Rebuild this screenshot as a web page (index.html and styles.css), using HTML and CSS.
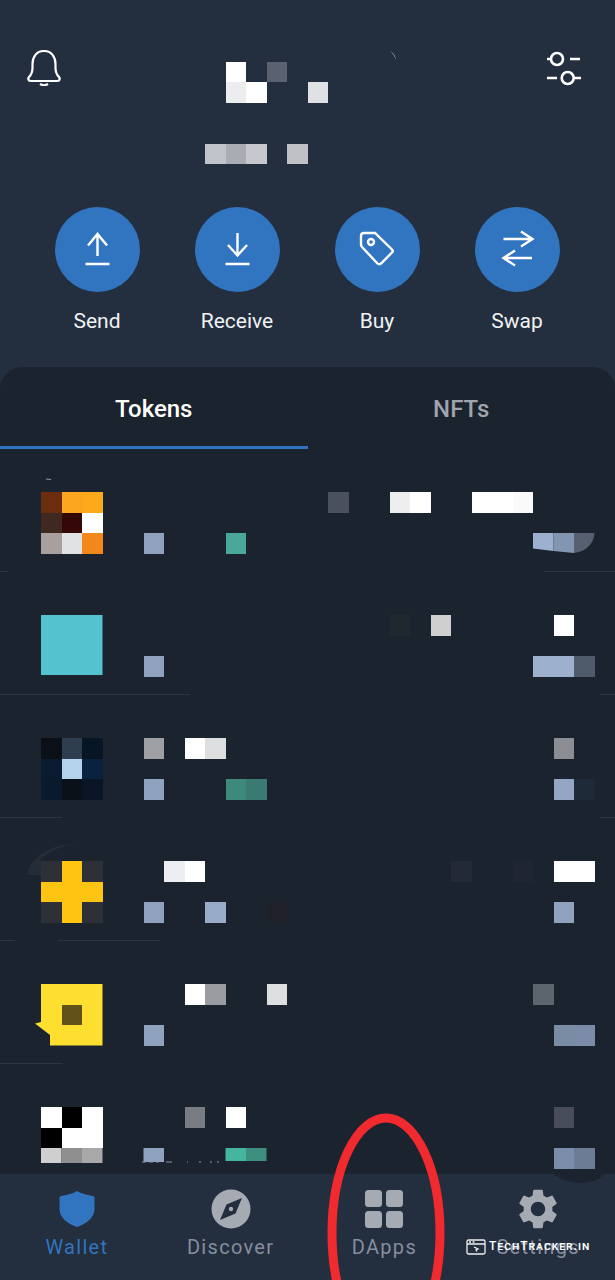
FILE: index.html
```html
<!DOCTYPE html>
<html>
<head>
	<meta charset="utf-8">
	<title>Wallet</title>
	<link rel="stylesheet" href="styles.css">
</head>
<body>
	<div class="top">
		<div class="top-bar">
			<svg class="bell" viewBox="0 0 34 36">
				<path d="M17 1C9.500 1 5.500 7 5.500 14V18C5.500 22 4 25 2 27C.5 29 1.500 31 4 31H30C32.500 31 33.500 29 32 27C30 25 28.500 22 28.500 18V14C28.500 7 24.500 1 17 1Z"/>
				<path d="M13 34Q17 36.500 21 34"/>
			</svg>
			<svg class="balance" viewBox="205 50 195 114">
				<rect class="c" x="225.500" y="61.500" fill="#fff"/>
				<rect class="c" x="266.500" y="61.500" fill="#5a6270"/>
				<rect class="c" x="225.500" y="82" fill="#ecedee"/>
				<rect class="c" x="246" y="82" fill="#fff"/>
				<rect class="c" x="307.500" y="82" fill="#e0e1e4"/>
				<rect class="c" x="205" y="143.500" fill="#c0c3ca"/>
				<rect class="c" x="225.500" y="143.500" fill="#a9acb3"/>
				<rect class="c" x="246" y="143.500" fill="#c6c8cd"/>
				<rect class="c" x="287" y="143.500" fill="#bfc1c7"/>
				<path d="M390 51Q395 54 396 60Q394 54 390 51Z" fill="#fff"/>
			</svg>
			<svg class="sliders" viewBox="546 50 36 38">
				<circle cx="557" cy="59" r="6"/>
				<circle cx="567.700" cy="78" r="6"/>
				<path d="M547 59H551M570 59H580M547 78H557M574 78H581"/>
			</svg>
		</div>
		<div class="actions">
			<div class="action">
				<svg class="action-btn" viewBox="0 0 85 85"><circle cx="42.500" cy="42.500" r="42.500"/><path d="M42.500 27V49M33 38.500L42.500 27L52 38.500M30.500 57H54.500"/></svg>
				<span>Send</span>
			</div>
			<div class="action">
				<svg class="action-btn" viewBox="0 0 85 85"><circle cx="42.500" cy="42.500" r="42.500"/><path d="M42.500 26V48M33 38L42.500 48.500L52 38M30.500 57H54.500"/></svg>
				<span>Receive</span>
			</div>
			<div class="action">
				<svg class="action-btn" viewBox="0 0 85 85"><circle cx="42.500" cy="42.500" r="42.500"/><path d="M29 26H40L57 42.500Q58.500 44 57 45.500L46 56.500Q44 58 42.500 56.500L27 40Q26 39 26 37.500V29Q26 26 29 26Z"/><circle class="hole" cx="36" cy="35" r="3"/></svg>
				<span>Buy</span>
			</div>
			<div class="action">
				<svg class="action-btn" viewBox="0 0 85 85"><circle cx="42.500" cy="42.500" r="42.500"/><path d="M28.500 32H57M46 24.500L57.500 32L46 39.500M57 51H29M40 43.500L28.500 51L40 58.500"/></svg>
				<span>Swap</span>
			</div>
		</div>
	</div>

	<div class="panel">
		<div class="tabs">
			<div class="tab active">Tokens</div>
			<div class="tab">NFTs</div>
		</div>

		<svg class="token" viewBox="0 -43 615 123">
			<rect class="c" x="41" y="0" fill="#6a2e0e"/><rect class="c" x="61.500" y="0" fill="#fca51f"/><rect class="c" x="82" y="0" fill="#fcaa1a"/>
			<rect class="c" x="41" y="20.500" fill="#3f2820"/><rect class="c" x="61.500" y="20.500" fill="#330806"/><rect class="c" x="82" y="20.500" fill="#fff"/>
			<rect class="c" x="41" y="41" fill="#a8a09d"/><rect class="c" x="61.500" y="41" fill="#e0e2e4"/><rect class="c" x="82" y="41" fill="#f2871a"/>
			<path d="M46 -13L51 -12.500" class="specks"/>
			<rect class="c" x="143.500" y="41" fill="#8fa1bd"/><rect class="c" x="225.500" y="41" fill="#4aa89a"/>
			<rect class="c" x="328" y="0" fill="#4a505c"/>
			<rect class="c" x="389.500" y="0" fill="#eeeeef"/><rect class="c" x="410" y="0" fill="#fff"/>
			<rect class="c" x="471.500" y="0" fill="#fff"/><rect class="c" x="492" y="0" fill="#fff"/><rect class="c" x="512.500" y="0" fill="#fafafa"/>
			<path d="M533 41H553.500V59L533 56.500Z" fill="#9eb0cf"/>
			<path d="M553.500 41H574V61L553.500 59Z" fill="#8396b1"/>
			<path d="M574 41H594.500C594 52 585 60 574 61Z" fill="#566070"/>
			<rect class="sep" x="0" y="79" width="8"/><rect class="sep" x="544" y="79" width="71"/>
		</svg>

		<svg class="token" viewBox="0 -43 615 123">
			<rect x="41" y="0" width="61.500" height="60" fill="#55c2cf"/>
			<rect class="c" x="143.500" y="41" fill="#8fa1bd"/>
			<rect class="c" x="389.500" y="0" fill="#20272f"/><rect class="c" x="430.500" y="0" fill="#cfcfd0"/>
			<rect class="c" x="553.500" y="0" fill="#fff"/>
			<rect class="c" x="533" y="41" fill="#9db0cd"/><rect class="c" x="553.500" y="41" fill="#9db0cd"/><rect class="c" x="574" y="41" fill="#4f5a6b"/>
			<rect class="sep" x="0" y="79" width="190"/><rect class="sep" x="600" y="79" width="15"/>
		</svg>

		<svg class="token" viewBox="0 -43 615 123">
			<rect class="c" x="41" y="0" fill="#0a0f18"/><rect class="c" x="61.500" y="0" fill="#2f3e4e"/><rect class="c" x="82" y="0" fill="#071525"/>
			<rect class="c" x="41" y="20.500" fill="#0a1a30"/><rect class="c" x="61.500" y="20.500" fill="#b5d2ec"/><rect class="c" x="82" y="20.500" fill="#0a2240"/>
			<rect class="c" x="41" y="41" fill="#0a1a2e"/><rect class="c" x="61.500" y="41" fill="#0b1119"/><rect class="c" x="82" y="41" fill="#0a1525"/>
			<rect class="c" x="143.500" y="0" fill="#9ea0a3"/><rect class="c" x="184.500" y="0" fill="#fff"/><rect class="c" x="205" y="0" fill="#dddee0"/>
			<rect class="c" x="553.500" y="0" fill="#8c8e93"/>
			<rect class="c" x="143.500" y="41" fill="#8fa3bf"/><rect class="c" x="225.500" y="41" fill="#3d8a7d"/><rect class="c" x="246" y="41" fill="#3b7a72"/>
			<rect class="c" x="553.500" y="41" fill="#94a6c4"/><rect class="c" x="574" y="41" fill="#1f2a38"/>
			<rect class="sep" x="0" y="79" width="62"/><rect class="sep" x="600" y="79" width="15"/>
		</svg>

		<svg class="token" viewBox="0 -43 615 123">
			<path d="M27 14C30 -2 48 -17 75 -17C58 -14 46 -8 40 0H41V14Z" fill="#262c37"/>
			<rect class="c" x="41" y="0" fill="#2e3038"/><rect class="c" x="61.500" y="0" fill="#ffc412"/><rect class="c" x="82" y="0" fill="#2e3038"/>
			<rect class="c" x="41" y="20.500" fill="#ffc412"/><rect class="c" x="61.500" y="20.500" fill="#ffc412"/><rect class="c" x="82" y="20.500" fill="#ffc412"/>
			<rect class="c" x="41" y="41" fill="#2e3038"/><rect class="c" x="61.500" y="41" fill="#ffc412"/><rect class="c" x="82" y="41" fill="#2e3038"/>
			<rect class="c" x="164" y="0" fill="#eceef1"/><rect class="c" x="184.500" y="0" fill="#fff"/>
			<rect class="c" x="451" y="0" fill="#232a35"/><rect class="c" x="512.500" y="0" fill="#1f2631"/>
			<rect class="c" x="553.500" y="0" fill="#fff"/><rect class="c" x="574" y="0" fill="#fff"/>
			<rect class="c" x="143.500" y="41" fill="#8fa1bf"/><rect class="c" x="205" y="41" fill="#98abc9"/><rect class="c" x="266.500" y="41" fill="#1f2029"/>
			<rect class="c" x="553.500" y="41" fill="#8fa1bf"/>
			<rect class="sep" x="0" y="79" width="15"/><rect class="sep" x="58" y="79" width="102"/>
		</svg>

		<svg class="token" viewBox="0 -43 615 123">
			<path d="M41 0H102.500V61.500H50V51L35 39.500L41 38Z" fill="#fede2f"/>
			<rect class="c" x="61.500" y="20.500" fill="#625118"/>
			<rect class="c" x="184.500" y="0" fill="#fff"/><rect class="c" x="205" y="0" fill="#9b9ca1"/><rect class="c" x="266.500" y="0" fill="#dcdee0"/>
			<rect class="c" x="533" y="0" fill="#5e646e"/>
			<rect class="c" x="143.500" y="41" fill="#8fa3bf"/>
			<rect class="c" x="553.500" y="41" fill="#7a8ba4"/><rect class="c" x="574" y="41" fill="#7c8ca8"/>
			<rect class="sep" x="0" y="79" width="63"/>
		</svg>

		<svg class="token" viewBox="0 -43 615 123">
			<rect class="c" x="41" y="0" fill="#fff"/><rect class="c" x="61.500" y="0" fill="#000"/><rect class="c" x="82" y="0" fill="#fff"/>
			<rect class="c" x="41" y="20.500" fill="#000"/><rect class="c" x="61.500" y="20.500" fill="#fff"/><rect class="c" x="82" y="20.500" fill="#fff"/>
			<rect x="41" y="41" width="20.500" height="15" fill="#cfcfcf"/><rect x="61.500" y="41" width="20.500" height="15" fill="#8f8f8f"/><rect x="82" y="41" width="20.500" height="15" fill="#a8a8a8"/>
			<rect class="c" x="184.500" y="0" fill="#7a7c84"/><rect class="c" x="225.500" y="0" fill="#fff"/>
			<rect class="c" x="553.500" y="0" fill="#484d59"/>
			<rect x="143.500" y="41" width="20.500" height="14" fill="#8fa3c0"/>
			<rect x="225.500" y="41" width="20.500" height="13" fill="#45b5a0"/><rect x="246" y="41" width="20.500" height="13" fill="#3f8f80"/>
			<path d="M142 55H146M149 55H153M156 55H159M166 55H172M187 55H188M199 55H201M210 55H212M217 55H219" class="specks"/>
			<rect class="c" x="553.500" y="41" fill="#7a8dab"/><rect class="c" x="574" y="41" fill="#6c7c95"/>
		</svg>
	</div>

	<div class="nav">
		<div class="nav-item active">
			<svg class="nav-icon" viewBox="0 0 40 40"><path d="M20 2C25 5 31 6 36 7C37 7 37.500 8 37.500 9V20C37.500 29 29 35 20 38C11 35 2.500 29 2.500 20V9C2.500 8 3 7 4 7C9 6 15 5 20 2Z"/></svg>
			<span>Wallet</span>
		</div>
		<div class="nav-item">
			<svg class="nav-icon" viewBox="0 0 40 40"><circle cx="20" cy="20" r="19.500"/><path class="needle" d="M31 9L24.500 24.500L9 31L15.500 15.500Z"/><circle cx="20" cy="20" r="2.200"/></svg>
			<span>Discover</span>
		</div>
		<div class="nav-item">
			<svg class="nav-icon" viewBox="0 0 40 40">
				<rect x="1" y="1" width="17" height="17" rx="3.500"/><rect x="22" y="1" width="17" height="17" rx="3.500"/>
				<rect x="1" y="22" width="17" height="17" rx="3.500"/><rect x="22" y="22" width="17" height="17" rx="3.500"/>
			</svg>
			<span>DApps</span>
		</div>
		<div class="nav-item">
			<svg class="nav-icon" viewBox="2 2 20 20"><path d="M19.140 12.940c.04-.3.06-.61.06-.94 0-.32-.02-.64-.07-.94l2.030-1.580c.18-.14.23-.41.12-.61l-1.920-3.320c-.12-.22-.37-.29-.59-.22l-2.390.96c-.5-.38-1.030-.7-1.620-.94l-.36-2.540c-.04-.24-.24-.41-.48-.41h-3.840c-.24 0-.43.17-.47.41l-.36 2.540c-.59.24-1.130.57-1.620.94l-2.390-.96c-.22-.08-.47 0-.59.22L2.740 8.870c-.12.21-.08.47.12.61l2.030 1.580c-.05.3-.09.63-.09.94s.02.64.07.94l-2.030 1.580c-.18.14-.23.41-.12.61l1.920 3.320c.12.22.37.29.59.22l2.390-.96c.5.38 1.030.7 1.620.94l.36 2.540c.05.24.24.41.48.41h3.840c.24 0 .44-.17.47-.41l.36-2.540c.59-.24 1.130-.56 1.620-.94l2.390.96c.22.08.47 0 .59-.22l1.920-3.320c.12-.22.07-.47-.12-.61l-2.010-1.580zM12 15.600c-1.980 0-3.600-1.620-3.600-3.600s1.620-3.600 3.600-3.600 3.600 1.620 3.600 3.600-1.620 3.600-3.600 3.600z"/></svg>
			<span>Settings</span>
		</div>
	</div>

	<!-- stuff drawn on top of the screenshot -->
	<svg class="markup" viewBox="0 1100 615 180">
		<path d="M553 1174Q566 1183 582 1183Q598 1182 604 1174Z" fill="#1b232e"/>
		<ellipse cx="386" cy="1233" rx="54" ry="115" fill="none" stroke="#f02a2e" stroke-width="9"/>
	</svg>
	<div class="watermark">
		<svg viewBox="0 0 20 16"><rect x="1" y="1" width="18" height="14" rx="1.500"/><path d="M1 5H19M3 3H5M6.500 3H8.500M8 8L12 10L10 11L11 12.500"/></svg>
		<span>TechTracker.in</span>
	</div>
</body>
</html>
```

FILE: styles.css
```css
body
{
	margin: 0;
	width: 615px;
	height: 1280px;
	overflow: hidden;
	position: relative;
	background: #232e3e;
	font-family: Roboto, "Liberation Sans", sans-serif;
	color: #fff;
}

.c
{
	width: 20.5px;
	height: 20.5px;
	shape-rendering: crispEdges;
}

/* header */
.top
{
	height: 367px;
}

.top-bar
{
	display: flex;
	align-items: flex-start;
	padding: 50px 33px 0 27px;
	margin-bottom: 43px;
}

.bell
{
	width: 34px;
	height: 36px;
	fill: none;
	stroke: #fff;
	stroke-width: 2.2;
}

.balance
{
	width: 195px;
	height: 114px;
	margin-left: 144px;
}

.sliders
{
	width: 36px;
	height: 38px;
	margin-left: auto;
	fill: none;
	stroke: #fff;
	stroke-width: 2.6;
}

.actions
{
	display: grid;
	grid-template-columns: repeat(4, 140px);
	padding-left: 27px;
}

.action
{
	display: flex;
	flex-direction: column;
	align-items: center;
	font-size: 21px;
	line-height: 24px;
	color: #f0f2f4;
}

.action-btn
{
	width: 85px;
	height: 85px;
	margin-bottom: 17px;
}

.action-btn circle
{
	fill: #3174bf;
}

.action-btn path, .action-btn .hole
{
	fill: none;
	stroke: #fff;
	stroke-width: 2.4;
}

/* token list */
.panel
{
	height: 807px;
	overflow: hidden;
	background: #1b232e;
	border-radius: 22px 22px 0 0;
}

.tabs
{
	display: flex;
	height: 82px;
}

.tab
{
	flex: 1;
	display: flex;
	align-items: center;
	justify-content: center;
	box-sizing: border-box;
	padding-top: 5px;
	border-bottom: 3px solid transparent;
	font-size: 24px;
	font-weight: 500;
	color: #a0a4ad;
}

.tab.active
{
	color: #fff;
	border-bottom-color: #3174bf;
}

.token
{
	display: block;
	width: 615px;
	height: 123px;
}

.sep
{
	height: 1px;
	fill: #2c3541;
}

.specks
{
	fill: none;
	stroke: #8f98a6;
	stroke-width: 1.2;
}

/* bottom nav */
.nav
{
	display: grid;
	grid-template-columns: repeat(4, 1fr);
	height: 106px;
	box-sizing: border-box;
	padding-top: 15px;
	background: #232e3e;
}

.nav-item
{
	display: flex;
	flex-direction: column;
	align-items: center;
	font-size: 20px;
	line-height: 24px;
	letter-spacing: 1.3px;
	color: #858f9f;
	fill: #a6abb3;
}

.nav-item.active
{
	color: #3174bf;
	fill: #3174bf;
}

.nav-icon
{
	width: 40px;
	height: 40px;
	margin-bottom: 6px;
}

.needle
{
	fill: #232e3e;
}

/* overlays */
.markup
{
	position: absolute;
	left: 0;
	top: 1100px;
	width: 615px;
	height: 180px;
}

.watermark
{
	position: absolute;
	left: 466px;
	top: 1238px;
	display: flex;
	align-items: center;
	gap: 3px;
	font-size: 12px;
	line-height: 17px;
	font-variant: small-caps;
	font-weight: 500;
	letter-spacing: 1px;
}

.watermark svg
{
	width: 20px;
	height: 16px;
	fill: none;
	stroke: #f0f0f0;
	stroke-width: 1.3;
}
```
